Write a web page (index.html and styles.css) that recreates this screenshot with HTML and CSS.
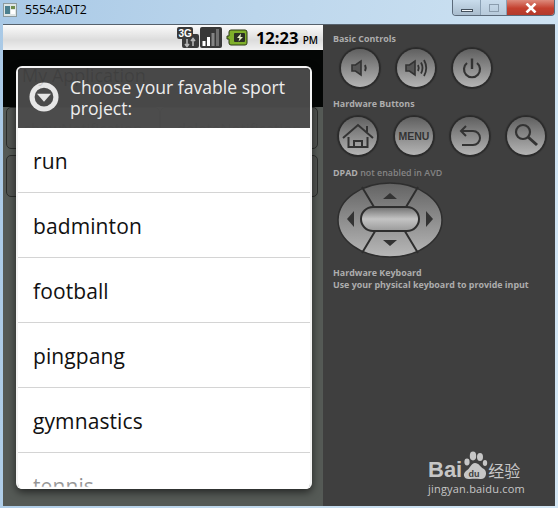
FILE: index.html
```html
<!DOCTYPE html>
<html lang="en">
<head>
  <meta charset="UTF-8">
  <title>5554:ADT2</title>
  <link rel="stylesheet" href="styles.css">
</head>
<body>
  <header class="titlebar">
    <svg class="app-icon" width="14" height="14" viewBox="0 0 14 14">
      <rect x="0.5" y="0.5" width="13" height="13" fill="#dfe6e6" stroke="#8d9a9c"/>
      <rect x="2" y="3" width="5" height="8" fill="#4c7f8e"/>
      <rect x="8" y="3" width="4" height="3" fill="#6f8c4e"/>
      <rect x="8" y="7" width="4" height="4" fill="#fff"/>
    </svg>
    <span class="window-name">5554:ADT2</span>
    <div class="window-buttons">
      <div class="win-btn win-min"><span></span></div>
      <div class="win-btn win-max"><span></span></div>
      <div class="win-btn win-close">
        <svg width="12" height="10" viewBox="0 0 12 10"><path d="M1.5 0.5 L10.5 9.5 M10.5 0.5 L1.5 9.5" stroke="#fff" stroke-width="2.6"/></svg>
      </div>
    </div>
  </header>

  <div class="frame">
    <section class="screen">
      <div class="statusbar">
        <svg width="22" height="22" viewBox="0 0 22 22">
          <path d="M2 0 H14 a2 2 0 0 1 2 2 V7 H20 a2 2 0 0 1 2 2 V19 a2 2 0 0 1-2 2 H7 a2 2 0 0 1-2-2 V12 H2 a2 2 0 0 1-2-2 V2 a2 2 0 0 1 2-2 Z" fill="#3a3a3a"/>
          <text x="1.500" y="10" class="net-label">3G</text>
          <path d="M10 12 v7 M8 17 l2 2.500 2-2.500 M16 19 v-7 M14 14 l2-2.500 2 2.500" stroke="#b5b5b5" stroke-width="1.600" fill="none"/>
        </svg>
        <svg width="22" height="22" viewBox="0 0 22 22">
          <rect x="0" y="0" width="22" height="21" rx="2" fill="#383838"/>
          <rect x="2.500" y="14" width="3" height="5" fill="#fff"/>
          <rect x="7" y="10" width="3" height="9" fill="#fff"/>
          <rect x="11.500" y="6" width="3" height="13" fill="#858585"/>
          <rect x="16" y="2" width="3" height="17" fill="#707070"/>
        </svg>
        <svg class="battery" width="22" height="17" viewBox="0 0 22 17">
          <path d="M5 1 H19 a2 2 0 0 1 2 2 V14 a2 2 0 0 1-2 2 H5 a2 2 0 0 1-2-2 V10 H1 V7 H3 V3 a2 2 0 0 1 2-2 Z" fill="#7faf2a" stroke="#2c3a16" stroke-width="1"/>
          <rect x="8" y="4" width="11" height="9" rx="1" fill="#2a2f22"/>
          <path d="M15 4.500 L11 9 H13.500 L12.500 12.500 L17 8 H14.500 Z" fill="#e8f2c8"/>
        </svg>
        <span class="clock">12:23 <small>PM</small></span>
      </div>

      <div class="app-bar"><span class="app-name">My Application</span></div>
      <div class="app-buttons">
        <div class="app-btn">showNotification</div>
        <div class="app-btn">deleteNotification</div>
        <div class="app-btn app-btn-wide"></div>
      </div>

      <div class="dialog">
        <div class="dialog-title">
          <svg class="dialog-icon" width="30" height="30" viewBox="0 0 32 32">
            <circle cx="16" cy="16" r="15.500" fill="#e6e6e6"/>
            <circle cx="16" cy="16" r="10" fill="#4b4b4b"/>
            <path d="M8.500 12.500 H23.500 L16 21 Z" fill="#e6e6e6"/>
          </svg>
          <h2>Choose your favable sport project:</h2>
        </div>
        <ul class="sport-list">
          <li>run</li>
          <li>badminton</li>
          <li>football</li>
          <li>pingpang</li>
          <li>gymnastics</li>
          <li>tennis</li>
        </ul>
      </div>
    </section>

    <aside class="panel">
      <h4>Basic Controls</h4>
      <div class="key-row key-row-basic">
        <div class="round-key">
          <svg width="38" height="38" viewBox="0 0 38 38"><path d="M11 16 H14.500 L20 12 V26 L14.500 22 H11 Z" fill="#555" stroke="#333" stroke-width="1.600"/><path d="M24 16 q1.500 3 0 6" fill="none" stroke="#333" stroke-width="2"/></svg>
        </div>
        <div class="round-key">
          <svg width="38" height="38" viewBox="0 0 38 38"><path d="M9 16 H12.500 L18 12 V26 L12.500 22 H9 Z" fill="#555" stroke="#333" stroke-width="1.600"/><path d="M21 16 q1.500 3 0 6 M24 13.500 q3 5.500 0 11 M27 11 q4.500 8 0 16" fill="none" stroke="#333" stroke-width="1.800"/></svg>
        </div>
        <div class="round-key">
          <svg width="38" height="38" viewBox="0 0 38 38"><path d="M14 14 a8 8 0 1 0 10 0" fill="none" stroke="#333" stroke-width="2.200"/><path d="M19 9.500 V20" stroke="#333" stroke-width="2.400"/></svg>
        </div>
      </div>

      <h4>Hardware Buttons</h4>
      <div class="key-row">
        <div class="round-key">
          <svg width="38" height="38" viewBox="0 0 38 38"><path d="M4 21 L19 8 L34 21 M28 9 V15 M9.500 20 V30 H28.500 V20 M15 30 V24 H23 V30" fill="none" stroke="#333" stroke-width="2"/></svg>
        </div>
        <div class="round-key"><span class="menu-label">MENU</span></div>
        <div class="round-key">
          <svg width="38" height="38" viewBox="0 0 38 38"><path d="M15 9 L10 14 L15 19 M10 14 H22 a7 7 0 0 1 0 14 H11" fill="none" stroke="#333" stroke-width="2"/></svg>
        </div>
        <div class="round-key">
          <svg width="38" height="38" viewBox="0 0 38 38"><circle cx="16" cy="15" r="7" fill="none" stroke="#333" stroke-width="2.200"/><path d="M21 20 L30 28" stroke="#333" stroke-width="3"/></svg>
        </div>
      </div>

      <h4>DPAD <span class="dim">not enabled in AVD</span></h4>
      <svg class="dpad" width="106" height="76" viewBox="0 0 106 76">
        <defs>
          <linearGradient id="padFill" x1="0" y1="0" x2="0" y2="1">
            <stop offset="0" stop-color="#636363"/>
            <stop offset="1" stop-color="#b8b8b8"/>
          </linearGradient>
          <linearGradient id="hubFill" x1="0" y1="0" x2="0" y2="1">
            <stop offset="0" stop-color="#6f6f6f"/>
            <stop offset="0.500" stop-color="#c4c4c4"/>
            <stop offset="1" stop-color="#9a9a9a"/>
          </linearGradient>
        </defs>
        <ellipse cx="53" cy="38" rx="52" ry="37" fill="url(#padFill)" stroke="#2e2e2e" stroke-width="1.500"/>
        <path d="M25 5 L40 30 M81 5 L66 30 M25 71 L40 46 M81 71 L66 46" stroke="#2e2e2e" stroke-width="2"/>
        <rect x="24" y="25" width="58" height="24" rx="12" fill="url(#hubFill)" stroke="#2e2e2e" stroke-width="2"/>
        <path d="M53 11 L60 17 H46 Z M53 64 L60 58 H46 Z M10 37 L17 29 V45 Z M96 37 L89 29 V45 Z" fill="#333"/>
      </svg>

      <h4 class="keyboard-note">Hardware Keyboard<br>Use your physical keyboard to provide input</h4>

      <div class="watermark">
        <div class="wm-top">
          <span class="wm-bai">Bai</span>
          <svg class="wm-paw" width="26" height="30" viewBox="0 0 26 30">
            <ellipse cx="5" cy="11" rx="2.600" ry="3.400"/>
            <ellipse cx="11" cy="5" rx="3.200" ry="4.400"/>
            <ellipse cx="18" cy="6" rx="3" ry="4"/>
            <ellipse cx="23" cy="12" rx="2.200" ry="3"/>
            <path d="M13 12 C17 12 18 16 22 18 C26 21 24 29 18 28 C15 27.500 11 27.500 8 28 C2 29 0 23 4 20 C8 18 9 12 13 12 Z"/>
            <text x="6.500" y="26" class="wm-du">du</text>
          </svg>
          <span class="wm-cn">经验</span>
        </div>
        <div class="wm-url">jingyan.baidu.com</div>
      </div>
    </aside>
  </div>
</body>
</html>
```

FILE: styles.css
```css
html, body { margin: 0; padding: 0; }
body { width: 558px; height: 508px; overflow: hidden; font-family: "Liberation Sans", sans-serif; background: linear-gradient(100deg, #a9c9e6 0%, #bcd6ec 40%, #d3e6f4 100%); }

.titlebar { height: 24px; display: flex; align-items: center; padding-left: 3px; position: relative; box-sizing: border-box; }
.app-icon { margin-right: 8px; margin-top: -5px; }
.window-name { font-family: "Open Sans", sans-serif; font-size: 12.300px; color: #000; margin-top: -5px; }
.window-buttons { position: absolute; top: 0; right: 3px; display: flex; height: 15px; border: 1px solid #5b6a7a; border-top: none; border-radius: 0 0 4px 4px; overflow: hidden; }
.win-btn { display: flex; align-items: center; justify-content: center; height: 15px; box-sizing: border-box; border-right: 1px solid #8aa0b4; }
.win-min { width: 28px; background: linear-gradient(#c9dcec, #a9bccd); }
.win-min span { width: 12px; height: 3px; background: #f4f8fb; border: 1px solid #44505c; margin-top: 5px; box-sizing: border-box; }
.win-max { width: 26px; background: linear-gradient(#c9dcec, #b7cadb); }
.win-max span { width: 10px; height: 8px; border: 1px solid #8a9cad; box-sizing: border-box; }
.win-close { width: 47px; border-right: none; background: linear-gradient(#dd8a7c, #c4402f 55%, #b23a2c); }

.frame { display: flex; height: 481px; margin: 0 3px; border-top: 1px solid #56616c; }

.screen { position: relative; width: 320px; display: flex; flex-direction: column; background: #555a56; flex: none; overflow: hidden; }
.statusbar { height: 25px; flex: none; display: flex; align-items: center; justify-content: flex-end; gap: 1px; padding-right: 5px; box-sizing: border-box; background: linear-gradient(#fbfbfb, #dcdcdc 60%, #f0f0f0); }
.net-label { font: bold 10px "Liberation Sans", sans-serif; fill: #fff; }
.battery { margin-left: 3px; }
.clock { font-family: "Open Sans", sans-serif; font-weight: 700; font-size: 16.500px; color: #000; margin-left: 7px; }
.clock small { font-size: 10px; font-weight: 600; }

.app-bar { height: 32px; flex: none; background: #040605; font-family: "Open Sans", sans-serif; font-size: 18px; padding: 13px 0 12px 19px; }
.app-name { position: relative; z-index: 2; color: rgba(0, 0, 0, 0.12); }
.app-buttons { display: grid; grid-template-columns: 154px 158px; gap: 6px 0; padding: 0 0 0 3px; }
.app-btn { height: 42px; box-sizing: border-box; border: 1px solid #2b2d2b; border-radius: 5px; background: #515451; color: #1e201e; font-family: "Open Sans", sans-serif; font-size: 15px; text-align: center; padding-top: 10px; }
.app-btn-wide { grid-column: 1 / 3; }

.dialog { position: absolute; left: 13px; top: 41px; width: 296px; height: 423px; box-sizing: border-box; border: 2px solid #f4f4f4; border-bottom: none; border-radius: 6px; overflow: hidden; display: flex; flex-direction: column; box-shadow: 0 3px 8px rgba(0, 0, 0, 0.6); }
.dialog-title { height: 60px; flex: none; box-sizing: border-box; display: flex; align-items: center; gap: 11px; padding: 0 10px 0 11px; background: rgba(76, 76, 76, 0.95); }
.dialog-icon { flex: none; margin-top: -3px; }
.dialog-title h2 { margin: 0; font-family: "Open Sans", sans-serif; font-weight: 400; font-size: 17.600px; line-height: 21px; color: #ededed; }

.sport-list { list-style: none; margin: 0; padding: 0; flex: 1; background: #fff; }
.sport-list li { height: 64px; line-height: 66px; border-bottom: 1px solid #d4d4d4; padding-left: 15px; font-family: "Open Sans", sans-serif; font-size: 21px; letter-spacing: 0.1px; color: #111; }
.dialog::after { content: ""; position: absolute; left: 0; right: 0; bottom: 0; height: 14px; background: linear-gradient(rgba(255, 255, 255, 0.45), rgba(255, 255, 255, 0.6) 80%, #fff 90%); }

.panel { flex: 1; background: #3f3f3f; padding: 8px 0 0 10px; position: relative; box-sizing: border-box; }
.panel h4 { margin: 0; font-family: "Open Sans", sans-serif; font-weight: 700; font-size: 8.900px; line-height: 11px; color: #adadad; }
.panel .dim { color: #858585; font-weight: 600; }
.key-row { display: flex; gap: 18px; margin: 5px 0 11px 7px; }
.key-row-basic { margin-left: 8px; }
.key-row + h4 + .key-row { margin: 8px 0 12px 6px; }
.round-key { width: 38px; height: 38px; border-radius: 50%; flex: none; background: linear-gradient(#606060, #b4b4b4); box-shadow: 0 0 1px 2px #2b2b2b; display: flex; align-items: center; justify-content: center; }
.menu-label { font: bold 10.500px "Liberation Sans", sans-serif; color: #333; }
.dpad { display: block; margin: 4px 0 0 4px; }
.keyboard-note { margin-top: 9px !important; line-height: 12px !important; }

.watermark { position: absolute; right: 30px; bottom: 11px; color: #c6c6c6; text-align: center; }
.wm-top { display: flex; align-items: flex-end; height: 32px; margin-bottom: 1px; }
.wm-bai { font: bold 22px "Liberation Sans", sans-serif; line-height: 22px; }
.wm-paw { fill: #c6c6c6; margin: 0; }
.wm-du { font: bold 9px "Liberation Sans", sans-serif; fill: #3f3f3f; }
.wm-cn { font-family: "Noto Sans CJK SC", sans-serif; font-size: 16px; line-height: 22px; }
.wm-url { font-family: "Open Sans", sans-serif; font-size: 11px; line-height: 13px; letter-spacing: 0.2px; }
```
